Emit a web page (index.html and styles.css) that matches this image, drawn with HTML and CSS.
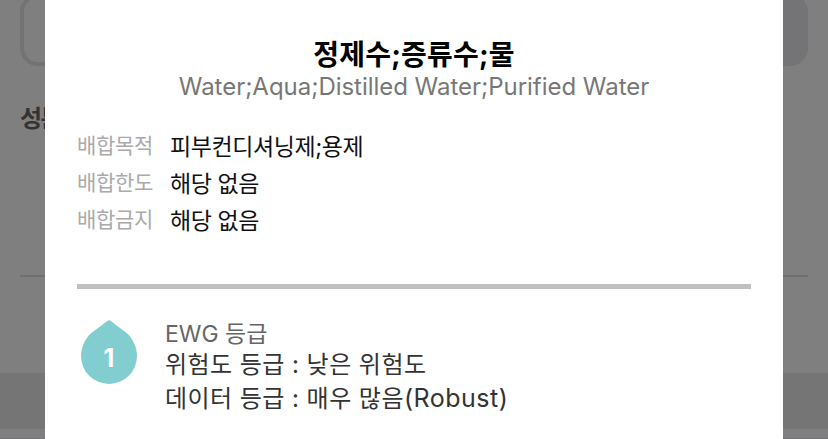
FILE: index.html
```html
<!DOCTYPE html>
<html lang="ko">
  <head>
    <meta charset="utf-8">
    <title>성분 정보</title>
    <link rel="stylesheet" href="styles.css">
  </head>
  <body>
    <div class="page">
      <div class="search">
        <div class="search-input"></div>
        <div class="search-button"></div>
      </div>
      <h2 class="page-title">성분</h2>
      <div class="page-line"></div>
      <div class="page-band"></div>
      <div class="page-bottom"></div>
    </div>

    <div class="modal">
      <h1 class="name">정제수;증류수;물</h1>
      <p class="name-en">Water;Aqua;Distilled Water;Purified Water</p>

      <dl class="info">
        <dt>배합목적</dt>
        <dd>피부컨디셔닝제;용제</dd>
        <dt>배합한도</dt>
        <dd>해당 없음</dd>
        <dt>배합금지</dt>
        <dd>해당 없음</dd>
      </dl>

      <div class="ewg">
        <div class="drop">
          <svg width="56" height="64" viewBox="0 0 56 64">
            <path d="M29 0.500L45 12.500C52 18.500 56 27 56 36A28 28 0 0 1 0 36C0 27 4 18.500 11 12.500L27 0.500Q28 -0.200 29 0.500Z" fill="#82cdd0"/>
          </svg>
          <span class="drop-number">1</span>
        </div>
        <div class="ewg-text">
          <p class="ewg-title">EWG 등급</p>
          <p class="ewg-risk">위험도 등급 : 낮은 위험도</p>
          <p class="ewg-data">데이터 등급 : 매우 많음<span class="latin">(Robust)</span></p>
        </div>
      </div>
    </div>
  </body>
</html>
```
FILE: styles.css
```css
* {
  box-sizing: border-box;
}

body {
  margin: 0;
  height: 439px;
  position: relative;
  overflow: hidden;
  background-color: #7f7f7f;
  font-family: Inter, "Noto Sans CJK KR", sans-serif;
}

h1,
h2,
p,
dl,
dd {
  margin: 0;
}

/* Dimmed page behind the modal */
.page {
  height: 439px;
  display: flex;
  flex-direction: column;
}

.search {
  display: flex;
  height: 66px;
  margin: 0 20px;
}

.search-input {
  flex: 1;
  margin-top: -6px;
  border: 4px solid #737376;
  border-radius: 18px;
}

.search-button {
  width: 90px;
  margin-top: -6px;
  background-color: #747477;
  border-radius: 18px;
}

.page-title {
  height: 209px;
  padding: 37px 0 0 20px;
  color: #333;
  font-size: 24px;
  line-height: 32px;
  letter-spacing: -1.5px;
}

.page-line {
  height: 2px;
  margin: 0 20px;
  background-color: #6f6f6f;
}

.page-band {
  height: 56px;
  margin-top: 96px;
  background-color: #757575;
}

.page-bottom {
  height: 1px;
  margin-top: 9px;
  background-color: #777275;
}

/* Modal */
.modal {
  position: absolute;
  top: 0;
  left: 45px;
  width: 738px;
  height: 439px;
  padding: 36px 32px 0;
  background-color: #fff;
}

.name {
  color: #000;
  font-size: 28px;
  line-height: 38px;
  letter-spacing: 0.2px;
  text-align: center;
}

.name-en {
  margin-top: -1px;
  color: #777;
  font-size: 24px;
  line-height: 28px;
  letter-spacing: -0.03px;
  text-align: center;
}

.info {
  display: grid;
  grid-template-columns: 93px 1fr;
  grid-auto-rows: 37px;
  align-items: center;
  height: 188px;
  padding-top: 28px;
  border-bottom: 5px solid #c0c0c0;
}

.info dt {
  margin-top: -4px;
  color: #aaa;
  font-size: 21px;
  line-height: 37px;
  letter-spacing: -0.3px;
}

.info dd {
  color: #111;
  font-size: 23px;
  line-height: 37px;
  letter-spacing: -0.4px;
}

.ewg {
  display: flex;
  padding: 31px 0 0 4px;
}

.drop {
  position: relative;
  width: 56px;
  height: 64px;
}

/* Sits over the drop shape */
.drop-number {
  position: absolute;
  top: 24px;
  left: 0;
  width: 56px;
  color: #fff;
  font-size: 25px;
  font-weight: 700;
  line-height: 28px;
  text-align: center;
}

.ewg-text {
  margin-left: 28px;
  color: #333;
  font-size: 24px;
  line-height: 34px;
  letter-spacing: 0.45px;
}

.ewg-title {
  color: #666;
  font-size: 23px;
  line-height: 28px;
  letter-spacing: 0;
}

.ewg-risk {
  line-height: 33px;
}

.latin {
  font-size: 25px;
  letter-spacing: 0.5px;
}
```
